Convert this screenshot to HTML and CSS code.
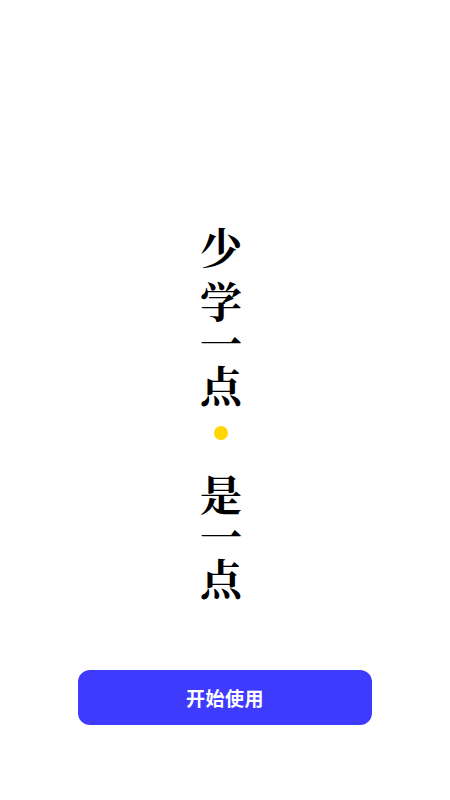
FILE: index.html
```html
<!DOCTYPE html>
<html lang="zh-CN">
<head>
<meta charset="utf-8">
<link rel="stylesheet" href="styles.css">
<title>少学一点是一点</title>
</head>
<body>
<main class="page">
  <div class="poem">
    <div class="group">
      <span class="ch ch-first">少</span>
      <span class="ch">学</span>
      <span class="ch">一</span>
      <span class="ch">点</span>
    </div>
    <span class="dot"></span>
    <div class="group">
      <span class="ch">是</span>
      <span class="ch">一</span>
      <span class="ch">点</span>
    </div>
  </div>
  <button class="start">开始使用</button>
</main>
</body>
</html>
```
FILE: styles.css
```css
html, body {
  margin: 0;
  padding: 0;
  background: #ffffff;
}
.page {
  width: 450px;
  height: 800px;
  display: flex;
  flex-direction: column;
  align-items: center;
  padding-top: 225px;
  box-sizing: border-box;
}
.poem {
  display: flex;
  flex-direction: column;
  align-items: center;
  padding-right: 8px;
}
.group {
  display: flex;
  flex-direction: column;
  align-items: center;
}
.ch {
  display: block;
  font-family: "Noto Serif CJK SC", "Source Han Serif SC", "AR PL UMing CN", "Noto Sans CJK SC", serif;
  font-weight: 700;
  font-size: 42px;
  line-height: 42px;
  height: 42px;
  color: #000000;
}
.ch-first {
  margin-bottom: 12px;
}
.dot {
  display: block;
  width: 14px;
  height: 14px;
  border-radius: 50%;
  background: #ffd600;
  margin: 21px 0 32px;
}
.start {
  margin-top: 72px;
  width: 294px;
  height: 55px;
  border: none;
  border-radius: 12px;
  background: #3e3bff;
  color: #ffffff;
  font-family: "Noto Sans CJK SC", sans-serif;
  font-weight: 700;
  font-size: 19px;
  letter-spacing: 0.5px;
}
```
